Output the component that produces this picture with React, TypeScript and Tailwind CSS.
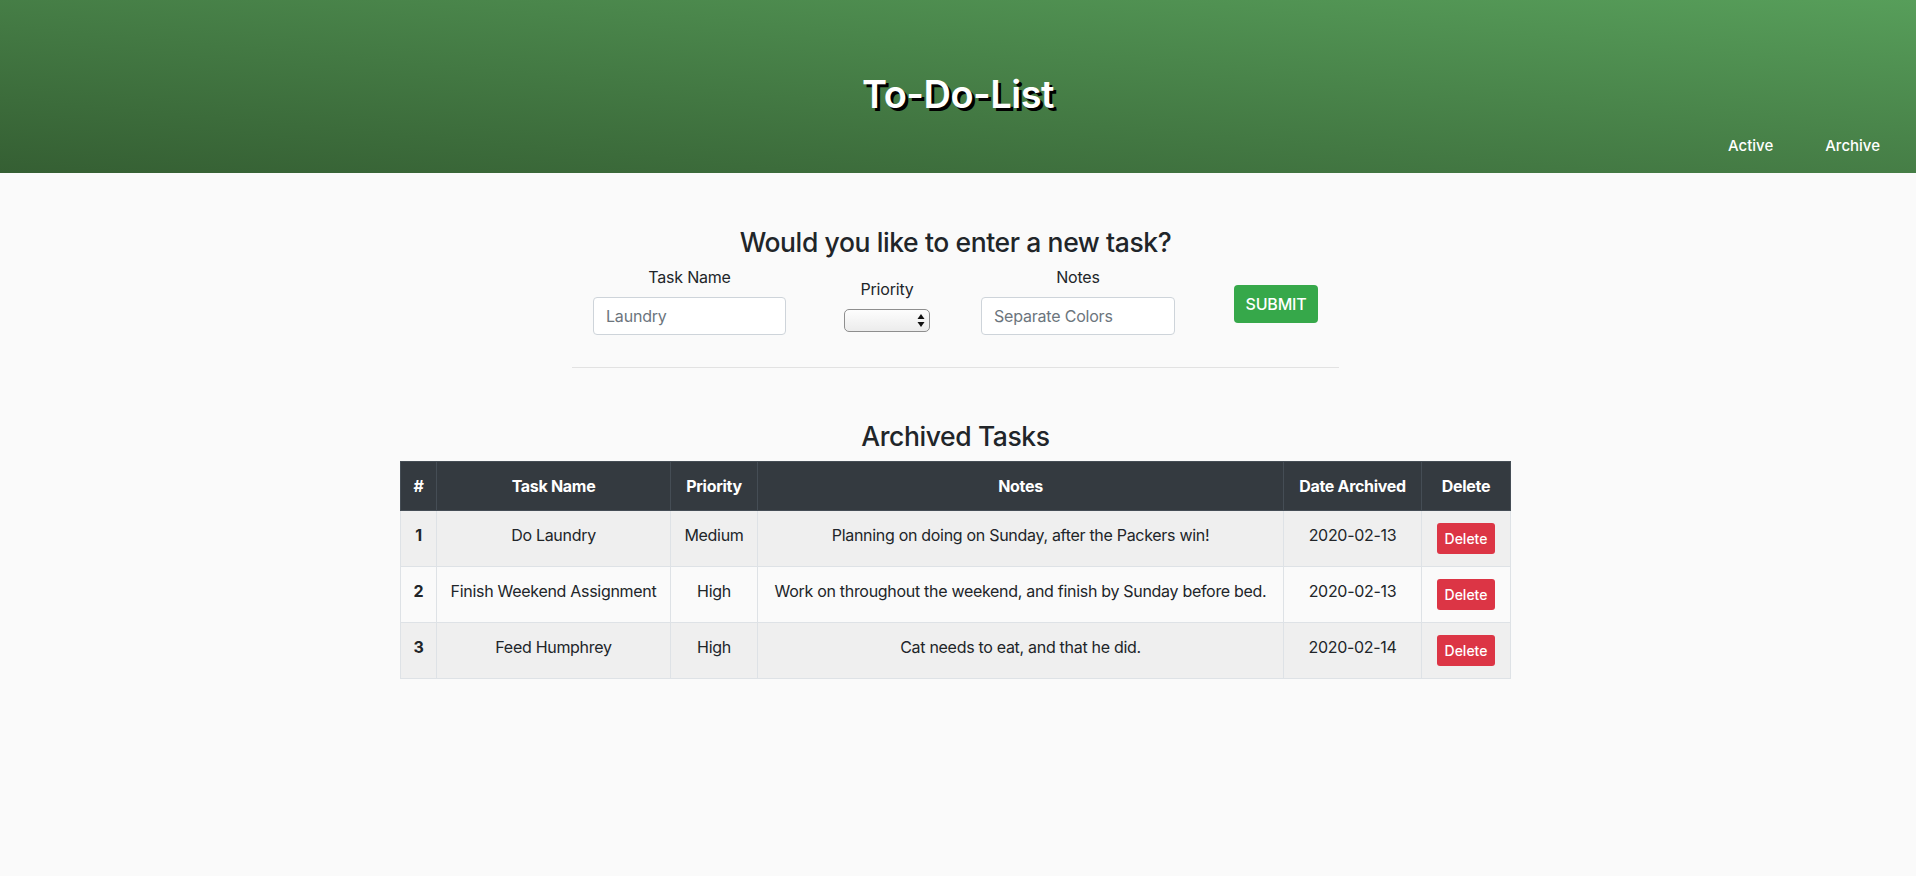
import React from "react";

const rows = [
  { n: 1, name: "Do Laundry", pri: "Medium", notes: "Planning on doing on Sunday, after the Packers win!", date: "2020-02-13" },
  { n: 2, name: "Finish Weekend Assignment", pri: "High", notes: "Work on throughout the weekend, and finish by Sunday before bed.", date: "2020-02-13" },
  { n: 3, name: "Feed Humphrey", pri: "High", notes: "Cat needs to eat, and that he did.", date: "2020-02-14" },
];

export default function App() {
  return (
    <div className="min-h-[876px] bg-[#fafafa] text-[#212529] font-['Inter','Noto_Sans',sans-serif]">
      <header className="h-[173px] bg-gradient-to-tr from-[#355f33] to-[#579e5a] flex flex-col">
        <h1 className="mt-[71px] text-center text-[38px] leading-[46px] font-semibold text-white [text-shadow:3px_3px_0_#000] tracking-[-0.5px]">
          To-Do-List
        </h1>
        <nav className="mt-[17px] flex justify-end gap-[52px] pr-[36px] text-white text-[15px] leading-[24px] font-medium">
          <a>Active</a>
          <a>Archive</a>
        </nav>
      </header>

      <section className="flex flex-col items-center pr-[5px]">
        <h3 className="mt-[52px] text-[26.5px] leading-[34px] font-medium tracking-[-0.4px]">
          Would you like to enter a new task?
        </h3>
        <div className="mt-[6px] flex items-start text-[16px] tracking-[-0.2px]">
          <div className="flex flex-col items-center">
            <label className="leading-[24px] mb-[8px]">Task Name</label>
            <div className="w-[193px] h-[38px] border border-[#ced4da] rounded-[4px] bg-white px-[12px] flex items-center text-[#6c757d]">
              Laundry
            </div>
          </div>
          <div className="ml-[58px] mt-[12px] flex flex-col items-center">
            <label className="leading-[24px] mb-[8px]">Priority</label>
            <div className="relative w-[86px] h-[23px] border border-[#8e8e8e] rounded-[5px] bg-gradient-to-b from-[#fdfdfd] to-[#ececec]">
              <svg className="absolute right-[4px] top-[3px]" width="8" height="15" viewBox="0 0 8 15">
                <path d="M4 1 L7.5 6 L0.5 6 Z" fill="#111" />
                <path d="M4 14 L7.5 9 L0.5 9 Z" fill="#111" />
              </svg>
            </div>
          </div>
          <div className="ml-[51px] flex flex-col items-center">
            <label className="leading-[24px] mb-[8px]">Notes</label>
            <div className="w-[194px] h-[38px] border border-[#ced4da] rounded-[4px] bg-white px-[12px] flex items-center text-[#6c757d]">
              Separate Colors
            </div>
          </div>
          <button className="ml-[59px] mt-[20px] w-[84px] h-[38px] rounded-[4px] bg-[#36a84a] text-white text-[16px] font-medium">
            SUBMIT
          </button>
        </div>
        <hr className="mt-[32px] w-[767px] border-0 border-t border-[#e2e2e2]" />
        <h3 className="mt-[51px] mb-[8px] text-[26.5px] leading-[34px] font-medium tracking-[-0.4px]">
          Archived Tasks
        </h3>
        <table className="w-[1110px] table-fixed border-collapse text-[16px] leading-[24px] tracking-[-0.3px]">
          <thead>
            <tr className="bg-[#343a40] text-white">
              <th className="w-[36px] border border-[#454d55] p-[12px] font-bold">#</th>
              <th className="w-[234px] border border-[#454d55] p-[12px] font-bold">Task Name</th>
              <th className="w-[87px] border border-[#454d55] p-[12px] font-bold">Priority</th>
              <th className="w-[526px] border border-[#454d55] p-[12px] font-bold">Notes</th>
              <th className="w-[138px] border border-[#454d55] p-[12px] font-bold">Date Archived</th>
              <th className="w-[89px] border border-[#454d55] p-[12px] font-bold">Delete</th>
            </tr>
          </thead>
          <tbody>
            {rows.map((r) => (
              <tr key={r.n} className={r.n % 2 === 1 ? "bg-[#efefef]" : "bg-[#fafafa]"}>
                <td className="border border-[#dee2e6] p-[12px] align-top text-center font-bold">{r.n}</td>
                <td className="border border-[#dee2e6] p-[12px] align-top text-center whitespace-nowrap">{r.name}</td>
                <td className="border border-[#dee2e6] p-[12px] align-top text-center">{r.pri}</td>
                <td className="border border-[#dee2e6] p-[12px] align-top text-center whitespace-nowrap">{r.notes}</td>
                <td className="border border-[#dee2e6] p-[12px] align-top text-center">{r.date}</td>
                <td className="border border-[#dee2e6] p-[12px] align-top text-center">
                  <button className="h-[31px] px-[8px] rounded-[3px] bg-[#dc3545] text-white text-[14px] leading-[21px] font-medium tracking-normal">
                    Delete
                  </button>
                </td>
              </tr>
            ))}
          </tbody>
        </table>
      </section>
    </div>
  );
}
